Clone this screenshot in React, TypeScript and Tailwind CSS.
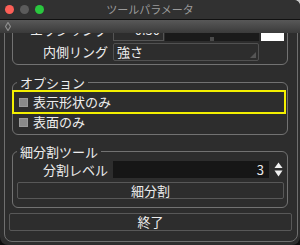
export default function App() {
  return (
    <div className="w-[300px] h-[245px] bg-[linear-gradient(to_bottom,#c9c9c9_0,#c9c9c9_12px,#0e0e0e_12px)]">
      <div className="w-full h-full flex flex-col bg-[#2d2d2d] rounded-tr-[6px] rounded-b-[8px] overflow-hidden font-['Noto_Sans_CJK_JP',sans-serif] text-[#ededed]">
        {/* title bar */}
        <div className="h-[19px] shrink-0 grid grid-cols-[1fr_auto_1fr] items-center bg-[#313131]">
          <div className="flex items-center gap-[6px] pl-[5px]">
            <span className="w-[9px] h-[9px] rounded-full bg-[#fc5f57]" />
            <span className="w-[9px] h-[9px] rounded-full bg-[#5b5b5b]" />
            <span className="w-[9px] h-[9px] rounded-full bg-[#2ac73f]" />
          </div>
          <div className="text-[11px] leading-none text-[#9b9b9b]">ツールパラメータ</div>
          <div />
        </div>
        <div className="h-px shrink-0 bg-[#111111]" />
        {/* toolbar */}
        <div className="h-[13px] shrink-0 flex items-center pl-[5px] bg-[linear-gradient(to_bottom,#585858,#3a3a3a)]">
          <svg width="6" height="9" viewBox="0 0 6 9" fill="none">
            <path d="M3 0.5 L5.5 4.5 L3 8.5 L0.5 4.5 Z" stroke="#8e8e8e" strokeWidth="1.2" />
          </svg>
        </div>
        {/* content */}
        <div className="flex-1 min-h-0 flex flex-col justify-end overflow-hidden">
          <div className="ml-[4px] mr-[2px] mb-[3px] shrink-0 flex flex-col border border-[#6f6f6f] rounded-b-[8px] pb-[10px]">
            {/* group 1 (scrolled) */}
            <fieldset className="ml-[7px] mr-[9px] border border-[#727272] rounded-[6px] flex flex-col gap-[2px] pb-[3px]">
              <div className="h-[17px] flex items-start">
                <div className="w-[95px] text-right text-[13px] leading-[11px]">エッジリング</div>
                <div className="ml-[5px] w-[51px] h-[17px] border border-[#555555] text-[13px] leading-[10px] text-right pr-[3px]">0.50</div>
                <div className="ml-[1px] w-[94px] h-[17px] bg-[#1a1a1a] flex items-end pl-[45px]">
                  <div className="w-[4px] h-[4px] bg-[#4a4a4a]" />
                </div>
                <div className="ml-[2px] w-[23px] h-[8px] self-end bg-white" />
              </div>
              <div className="h-[18px] flex items-center">
                <div className="w-[95px] text-right text-[13px] leading-[18px]">内側リング</div>
                <div className="ml-[5px] w-[146px] h-[18px] border border-[#515151] rounded-[2px] flex items-end justify-between pl-[3px] pr-[2px] pb-[2px]">
                  <span className="text-[13px] leading-[15px] self-center">強さ</span>
                  <svg width="6" height="6" viewBox="0 0 6 6">
                    <path d="M6 0 L6 6 L0 6 Z" fill="#555555" />
                  </svg>
                </div>
              </div>
            </fieldset>

            {/* options */}
            <fieldset className="mt-[10px] ml-[7px] mr-[9px] border border-[#727272] rounded-[6px] flex flex-col pb-[4px]">
              <legend className="ml-[4px] px-[3px] text-[13px] leading-[15px]">オプション</legend>
              <div className="-ml-[1px] mr-[1px] h-[24px] border-2 border-[#f3ef00] flex items-center pl-[5px] gap-[5px]">
                <span className="w-[9px] h-[9px] bg-[#8a8a8a] border border-[#9a9a9a]" />
                <span className="text-[13px] leading-[16px]">表示形状のみ</span>
              </div>
              <div className="h-[16px] flex items-center pl-[6px] gap-[5px]">
                <span className="w-[9px] h-[9px] bg-[#8a8a8a] border border-[#9a9a9a]" />
                <span className="text-[13px] leading-[16px]">表面のみ</span>
              </div>
            </fieldset>

            {/* subdivision */}
            <fieldset className="mt-[9px] ml-[7px] mr-[9px] border border-[#727272] rounded-[6px] flex flex-col pt-[2px] pb-[8px]">
              <legend className="ml-[4px] px-[3px] text-[13px] leading-[15px]">細分割ツール</legend>
              <div className="h-[17px] flex items-center">
                <div className="w-[95px] text-right text-[13px] leading-[17px]">分割レベル</div>
                <div className="ml-[5px] w-[156px] h-[17px] bg-[#161616] text-right pr-[5px] text-[13px] leading-[17px]">3</div>
                <svg className="ml-[5px]" width="9" height="15" viewBox="0 0 9 15">
                  <path d="M4.5 0.5 L8.5 6 L0.5 6 Z" fill="#f2f2f2" />
                  <path d="M0.5 8.5 L8.5 8.5 L4.5 14.5 Z" fill="#f2f2f2" />
                </svg>
              </div>
              <div className="mt-[4px] ml-[4px] mr-[3px] h-[17px] border border-[#585858] rounded-[2px] flex items-center justify-center text-[13px] leading-[15px]">
                細分割
              </div>
            </fieldset>

            {/* close */}
            <div className="mt-[5px] ml-[4px] mr-[5px] h-[18px] border border-[#585858] rounded-[2px] flex items-center justify-center text-[13px] leading-[16px]">
              終了
            </div>
          </div>
        </div>
      </div>
    </div>
  );
}
